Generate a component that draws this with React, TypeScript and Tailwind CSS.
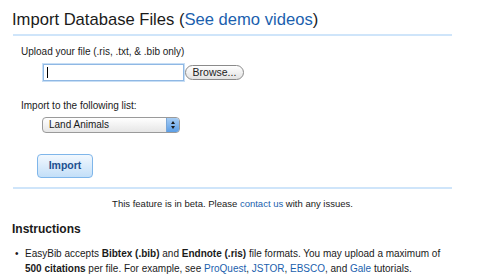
import React from "react";

export default function App() {
  return (
    <div
      className="min-h-screen bg-white text-[#1a1a1a]"
      style={{ fontFamily: '"Liberation Sans", Arial, sans-serif' }}
    >
      <div className="w-[439px] ml-[13px] pt-[9px]">
        <h1 className="text-[16.6px] leading-[22px] text-[#1a1a1a] -ml-[1px]">
          Import Database Files (
          <a className="text-[#1b5fae]">See demo videos</a>)
        </h1>
        <div className="h-[2px] bg-[#cfe5fa] mt-[3px]" />

        <div className="pl-[8px] pt-[10px] text-[10px]">
          <label className="block leading-[12px]">
            Upload your file (.ris, .txt, &amp; .bib only)
          </label>
          <div className="flex items-center mt-[6px] ml-[22px]">
            <div className="w-[141px] h-[17px] border border-[#8fb8e4] shadow-[0_0_0_1px_#c7def5] bg-white flex items-center pl-[3px]">
              <div className="w-px h-[11px] bg-black" />
            </div>
            <button className="ml-[1px] h-[15px] w-[59px] rounded-full border border-[#8a8a8a] bg-gradient-to-b from-white to-[#e2e2e2] text-[10.5px] leading-[13px] text-[#222]">
              Browse...
            </button>
          </div>

          <label className="block leading-[12px] mt-[19px]">
            Import to the following list:
          </label>
          <div className="mt-[5px] ml-[21px] w-[138px] h-[16px] rounded-[4px] border border-[#9a9a9a] bg-gradient-to-b from-white to-[#e6e6e6] flex items-center overflow-hidden">
            <span className="flex-1 pl-[6px] text-[10px] leading-[14px]">Land Animals</span>
            <div className="w-[13px] h-full bg-gradient-to-b from-[#a7cdf4] to-[#5b9ee6] border-l border-[#7aa7d8] flex flex-col items-center justify-center gap-[2px]">
              <div className="w-0 h-0 border-x-[2.5px] border-x-transparent border-b-[3px] border-b-[#1a1a1a]" />
              <div className="w-0 h-0 border-x-[2.5px] border-x-transparent border-t-[3px] border-t-[#1a1a1a]" />
            </div>
          </div>

          <button className="block mt-[21px] ml-[16px] w-[56px] h-[24px] rounded-[4px] border border-[#7fb6ea] bg-gradient-to-b from-[#f2f8fe] to-[#c3dff8] text-[10.5px] font-bold text-[#21508f]">
            Import
          </button>
        </div>

        <div className="h-[2px] bg-[#cfe5fa] mt-[9px]" />

        <p className="text-center text-[9.5px] leading-[12px] mt-[9px]">
          This feature is in beta. Please <a className="text-[#1b5fae]">contact us</a> with any issues.
        </p>

        <h2 className="text-[12px] font-bold leading-[14px] mt-[12px] -ml-[1px]">Instructions</h2>

        <ul className="mt-[10px] text-[10px] leading-[15px]">
          <li className="flex">
            <span className="w-[12px] pl-[2px]">•</span>
            <span className="flex-1">
              EasyBib accepts <b>Bibtex (.bib)</b> and <b>Endnote (.ris)</b> file formats. You may upload a maximum of{" "}
              <b>500 citations</b> per file. For example, see <a className="text-[#1b5fae]">ProQuest</a>,{" "}
              <a className="text-[#1b5fae]">JSTOR</a>, <a className="text-[#1b5fae]">EBSCO</a>, and{" "}
              <a className="text-[#1b5fae]">Gale</a> tutorials.
            </span>
          </li>
        </ul>
      </div>
    </div>
  );
}
